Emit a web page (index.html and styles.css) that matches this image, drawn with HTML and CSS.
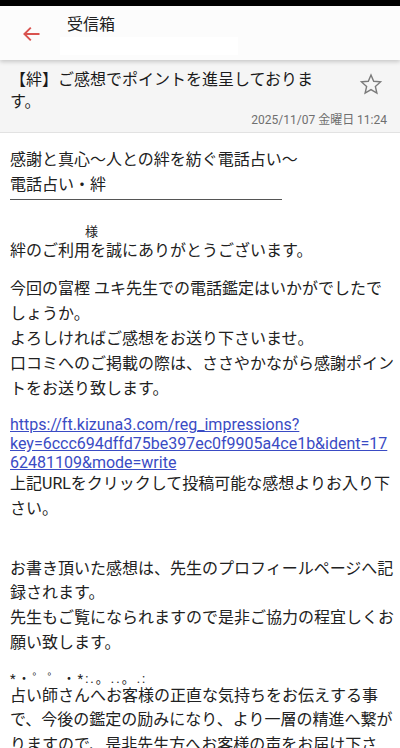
FILE: index.html
```html
<!DOCTYPE html>
<html lang="ja">
<head>
    <meta charset="UTF-8">
    <meta name="viewport" content="width=device-width, initial-scale=1.0">
    <title>受信箱</title>
    <link rel="stylesheet" href="styles.css">
</head>
<body>

    <div class="status-bar"></div>

    <!-- ヘッダー -->
    <header class="app-bar">
        <svg class="back" width="18" height="16" viewBox="0 0 18 16">
            <path d="M17.5 8H2.5 M8.8 1.6L2.4 8l6.4 6.4" fill="none" stroke="#d9534f" stroke-width="1.9"/>
        </svg>
        <div class="app-title">
            <div class="title">受信箱</div>
            <div class="mask"></div>
        </div>
    </header>

    <!-- 件名 -->
    <section class="subject">
        <div class="subject-row">
            <h1 class="subject-text">【絆】ご感想でポイントを進呈しております。</h1>
            <svg class="star" width="24" height="24" viewBox="0 0 24 24">
                <polygon points="12,2 14.7,8.28 21.51,8.91 16.37,13.42 17.88,20.09 12,16.6 6.12,20.09 7.63,13.42 2.49,8.91 9.3,8.28" fill="none" stroke="#7a7a7a" stroke-width="1.4"/>
            </svg>
        </div>
        <div class="date">2025/11/07 金曜日 11:24</div>
    </section>

    <!-- 本文 -->
    <main class="mail">
        <p class="line">感謝と真心〜人との絆を紡ぐ電話占い〜<br>電話占い・絆</p>
        <div class="rule"></div>
        <p class="name">様</p>
        <p class="line">絆のご利用を誠にありがとうございます。</p>

        <p class="line gap">今回の富樫 ユキ先生での電話鑑定はいかがでしたでしょうか。<br>よろしければご感想をお送り下さいませ。<br>口コミへのご掲載の際は、ささやかながら感謝ポイントをお送り致します。</p>

        <p class="link gap">
            <a href="#">https://ft.kizuna3.com/reg_impressions?<br>key=6ccc694dffd75be397ec0f9905a4ce1b&amp;ident=17<br>62481109&amp;mode=write</a>
        </p>
        <p class="line">上記URLをクリックして投稿可能な感想よりお入り下さい。</p>

        <p class="line gap-lg">お書き頂いた感想は、先生のプロフィールページへ記録されます。<br>先生もご覧になられますので是非ご協力の程宜しくお願い致します。</p>

        <p class="deco">*・゜゜・*:.。..。.:</p>
        <p class="line">占い師さんへお客様の正直な気持ちをお伝えする事で、今後の鑑定の励みになり、より一層の精進へ繋がりますので、是非先生方へお客様の声をお届け下さい。</p>
    </main>

</body>
</html>
```

FILE: styles.css
```css
body {
    margin: 0;
    background-color: #fff;
    font-family: Roboto, "Noto Sans CJK JP", sans-serif;
    color: #212121;
    width: 400px;
    height: 748px;
    overflow: hidden;
}

.status-bar {
    height: 6px;
    background-color: #000;
}

.app-bar {
    position: relative;
    z-index: 1;
    display: flex;
    height: 54px;
    padding-left: 22px;
    background-color: #fcfcfc;
    box-shadow: 0 2px 4px rgba(0, 0, 0, 0.18);
}

.back {
    margin-top: 20px;
}

.app-title {
    margin-left: 20px;
}

.title {
    padding: 9px 0 0 7px;
    font-size: 16px;
    line-height: 20px;
}

.mask {
    width: 178px;
    height: 18px;
    margin-top: 2px;
    background-color: #fff;
}

.subject {
    padding: 9px 0 5px 0;
    background-color: #f5f5f5;
    border-bottom: 1px solid #e2e2e2;
}

.subject-row {
    display: flex;
}

.subject-text {
    width: 312px;
    margin: 0 0 0 10px;
    font-size: 16px;
    font-weight: normal;
    line-height: 22px;
    color: #1a1a1a;
}

.star {
    margin: 4px 0 0 37px;
}

.date {
    padding-right: 13px;
    text-align: right;
    font-size: 12px;
    line-height: 14px;
    color: #6f6f6f;
}

.mail {
    padding: 15px 4px 0 10px;
    font-size: 16px;
}

.mail p {
    margin: 0;
}

.line {
    line-height: 24.8px;
}

.rule {
    width: 272px;
    margin-top: 1px;
    border-top: 1px solid #555;
}

.name {
    padding-left: 75px;
    margin-top: 25px !important;
    font-size: 13px;
    line-height: 14px;
}

.gap {
    margin-top: 14px !important;
}

.gap-lg {
    margin-top: 34.6px !important;
}

.link {
    line-height: 19px;
}

.link a {
    color: #3a4bc4;
    text-decoration: underline;
}

.deco {
    margin-top: 17.8px !important;
    font-size: 13px;
    line-height: 10px;
    letter-spacing: 2px;
    color: #222;
}
```
